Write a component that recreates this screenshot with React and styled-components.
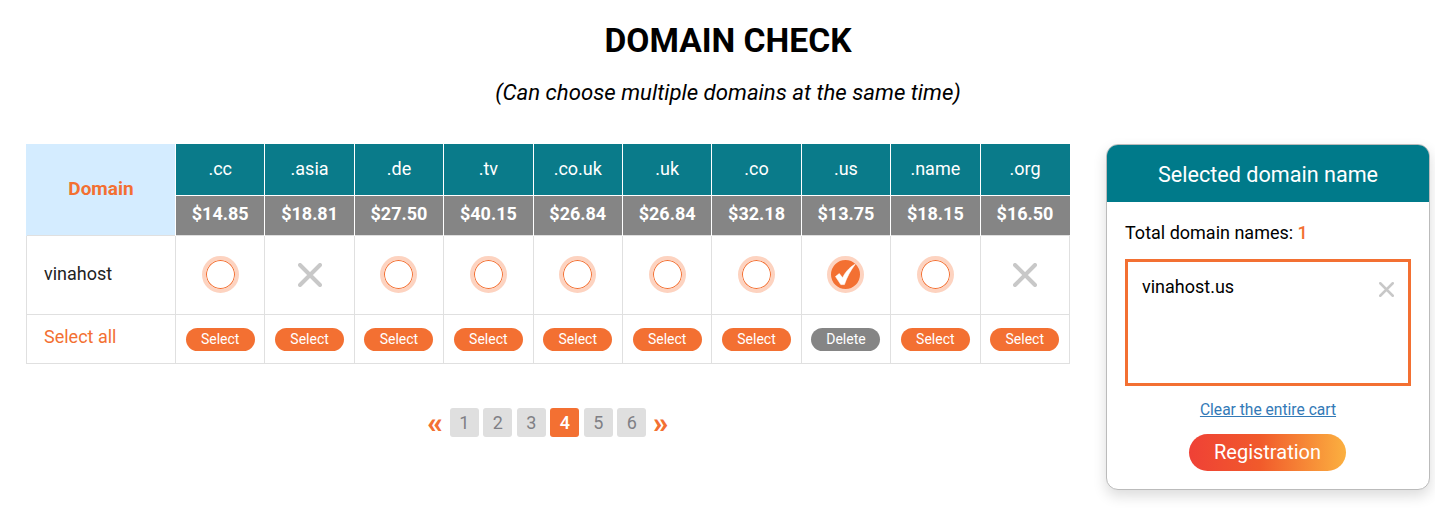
import React from 'react';
import styled, { createGlobalStyle } from 'styled-components';

const orange = '#f37032';
const teal = '#0a7b8a';

const GlobalStyle = createGlobalStyle`
  html, body {
    margin: 0;
    background: #fff;
    font-family: Roboto, "Liberation Sans", sans-serif;
    color: #000;
  }
`;

const Page = styled.div`
  box-sizing: border-box;
  width: 1435px;
  height: 523px;
  padding: 21px 5px 0 26px;
  overflow: hidden;
`;
const Title = styled.h1`
  margin: 0;
  font-size: 33.6px;
  line-height: 40px;
  font-weight: 700;
  text-align: center;
`;
const Subtitle = styled.p`
  margin: 11px 0 0;
  font-size: 22.2px;
  line-height: 40px;
  font-style: italic;
  text-align: center;
`;
const Columns = styled.div`
  display: flex;
  justify-content: space-between;
  align-items: flex-start;
  margin-top: 32px;
`;
const TableColumn = styled.div`
  width: 1044px;
`;
const Table = styled.table`
  width: 100%;
  table-layout: fixed;
  border-collapse: collapse;
`;
const DomainHead = styled.th`
  width: 148px;
  padding: 0 0 2px;
  background: #d4ecff;
  border-left: 1px solid #d4ecff;
  color: ${orange};
  font-size: 19px;
  font-weight: 700;
`;
const ExtCell = styled.th`
  height: 51px;
  padding: 0 0 2px;
  box-sizing: border-box;
  background: ${teal};
  border-left: 1px solid #fff;
  border-bottom: 1px solid #fff;
  color: #fff;
  font-size: 18px;
  font-weight: 400;
`;
const PriceCell = styled.th`
  height: 40px;
  padding: 0 0 4px;
  box-sizing: border-box;
  background: #858585;
  border-left: 1px solid #fff;
  color: #fff;
  font-size: 18px;
  font-weight: 700;
`;
const NameCell = styled.td`
  height: 79px;
  padding: 0 0 3px 17px;
  box-sizing: border-box;
  border: 1px solid #e0e0e0;
  font-size: 18px;
  color: #222;
`;
const SelectAllCell = styled(NameCell)`
  height: 49px;
  padding-bottom: 4px;
  color: ${orange};
`;
const BodyCell = styled.td`
  padding: 0;
  border: 1px solid #e0e0e0;
  text-align: center;
`;
const Radio = styled.span`
  display: inline-flex;
  align-items: center;
  justify-content: center;
  box-sizing: border-box;
  width: 37px;
  height: 37px;
  border-radius: 50%;
  vertical-align: middle;
  border: 4px solid #fdd3c0;
  box-shadow: inset 0 0 0 ${p => (p.$checked ? '0' : '1px')} ${orange};
  background: ${p => (p.$checked ? orange : '#fff')};
`;
const Cross = styled.svg`
  display: inline-block;
  vertical-align: middle;
`;
const Pill = styled.button`
  display: inline-block;
  width: 69px;
  height: 23px;
  margin-top: 1px;
  padding: 0;
  border: 0;
  border-radius: 12px;
  background: ${p => (p.$muted ? '#858585' : orange)};
  color: #fff;
  font-family: inherit;
  font-size: 14px;
  line-height: 23px;
`;
const Pager = styled.div`
  display: flex;
  justify-content: center;
  align-items: center;
  gap: 4.5px;
  margin-top: 44px;
`;
const PageArrow = styled.span`
  width: 20px;
  color: ${orange};
  font-size: 30px;
  font-weight: 900;
  line-height: 29px;
  text-align: center;
`;
const PageButton = styled.span`
  width: 29px;
  height: 29px;
  border-radius: 3px;
  background: ${p => (p.$active ? orange : '#dfdfdf')};
  color: ${p => (p.$active ? '#fff' : '#7f7f85')};
  font-size: 18px;
  font-weight: ${p => (p.$active ? 500 : 400)};
  line-height: 29px;
  text-align: center;
`;
const Panel = styled.aside`
  box-sizing: border-box;
  width: 324px;
  height: 346px;
  overflow: hidden;
  border: 1px solid #bbb;
  border-radius: 12px;
  background: #fff;
  box-shadow: 0 6px 14px rgba(0, 0, 0, 0.14);
`;
const PanelHead = styled.div`
  height: 57px;
  background: #007a8a;
  color: #fff;
  font-size: 21.6px;
  line-height: 59px;
  text-align: center;
`;
const PanelBody = styled.div`
  display: flex;
  flex-direction: column;
  padding: 19px 18px 0;
`;
const Total = styled.div`
  font-size: 18px;
  line-height: 24px;
  b {
    color: ${orange};
    font-weight: 500;
  }
`;
const CartBox = styled.div`
  box-sizing: border-box;
  display: flex;
  justify-content: space-between;
  align-items: flex-start;
  height: 127px;
  margin-top: 14px;
  padding: 14px;
  border: 3px solid ${orange};
  font-size: 18px;
  line-height: 22px;
`;
const CartRemove = styled.svg`
  margin-top: 6px;
`;
const ClearLink = styled.a`
  margin-top: 14px;
  color: #337ab7;
  font-size: 15.6px;
  line-height: 20px;
  text-align: center;
  text-decoration: underline;
`;
const Register = styled.button`
  align-self: flex-start;
  width: 157px;
  height: 37px;
  margin: 14px 0 0 64px;
  padding: 0;
  border: 0;
  border-radius: 19px;
  background: linear-gradient(90deg, #ef4136 0%, #f15a2b 45%, #fbb040 100%);
  color: #fff;
  font-family: inherit;
  font-size: 20px;
  line-height: 37px;
`;

const domains = [
  { ext: '.cc', price: '$14.85' },
  { ext: '.asia', price: '$18.81', taken: true },
  { ext: '.de', price: '$27.50' },
  { ext: '.tv', price: '$40.15' },
  { ext: '.co.uk', price: '$26.84' },
  { ext: '.uk', price: '$26.84' },
  { ext: '.co', price: '$32.18' },
  { ext: '.us', price: '$13.75', selected: true },
  { ext: '.name', price: '$18.15' },
  { ext: '.org', price: '$16.50', taken: true },
];

const CrossMark = () => (
  <Cross width="24" height="24" viewBox="0 0 24 24">
    <path d="M2 2 L22 22 M22 2 L2 22" stroke="#c8c8c8" strokeWidth="4" strokeLinecap="round" fill="none" />
  </Cross>
);

const Check = () => (
  <svg width="23" height="25" viewBox="0 0 23 25">
    <path d="M1.5 14.5 L5.3 11.6 L8.6 15.8 C11 10.8 15 5.5 21.2 2.2 C16.6 8.6 12.8 15 10.4 22.6 L6.8 22.6 Z" fill="#fff" stroke="#fff" strokeWidth="0.6" strokeLinejoin="round" />
  </svg>
);

const App = () => (
  <Page>
    <GlobalStyle />
    <Title>DOMAIN CHECK</Title>
    <Subtitle>(Can choose multiple domains at the same time)</Subtitle>
    <Columns>
      <TableColumn>
        <Table>
          <thead>
            <tr>
              <DomainHead rowSpan={2}>Domain</DomainHead>
              {domains.map(d => <ExtCell key={d.ext}>{d.ext}</ExtCell>)}
            </tr>
            <tr>
              {domains.map(d => <PriceCell key={d.ext}>{d.price}</PriceCell>)}
            </tr>
          </thead>
          <tbody>
            <tr>
              <NameCell>vinahost</NameCell>
              {domains.map(d => (
                <BodyCell key={d.ext}>
                  {d.taken ? <CrossMark /> : <Radio $checked={d.selected}>{d.selected && <Check />}</Radio>}
                </BodyCell>
              ))}
            </tr>
            <tr>
              <SelectAllCell>Select all</SelectAllCell>
              {domains.map(d => (
                <BodyCell key={d.ext}>
                  <Pill $muted={d.selected}>{d.selected ? 'Delete' : 'Select'}</Pill>
                </BodyCell>
              ))}
            </tr>
          </tbody>
        </Table>
        <Pager>
          <PageArrow>«</PageArrow>
          {[1, 2, 3, 4, 5, 6].map(n => <PageButton key={n} $active={n === 4}>{n}</PageButton>)}
          <PageArrow>»</PageArrow>
        </Pager>
      </TableColumn>
      <Panel>
        <PanelHead>Selected domain name</PanelHead>
        <PanelBody>
          <Total>Total domain names: <b>1</b></Total>
          <CartBox>
            vinahost.us
            <CartRemove width="15" height="15" viewBox="0 0 24 24">
              <path d="M2 2 L22 22 M22 2 L2 22" stroke="#c8c8c8" strokeWidth="4" strokeLinecap="round" fill="none" />
            </CartRemove>
          </CartBox>
          <ClearLink href="#">Clear the entire cart</ClearLink>
          <Register>Registration</Register>
        </PanelBody>
      </Panel>
    </Columns>
  </Page>
);

export default App;
